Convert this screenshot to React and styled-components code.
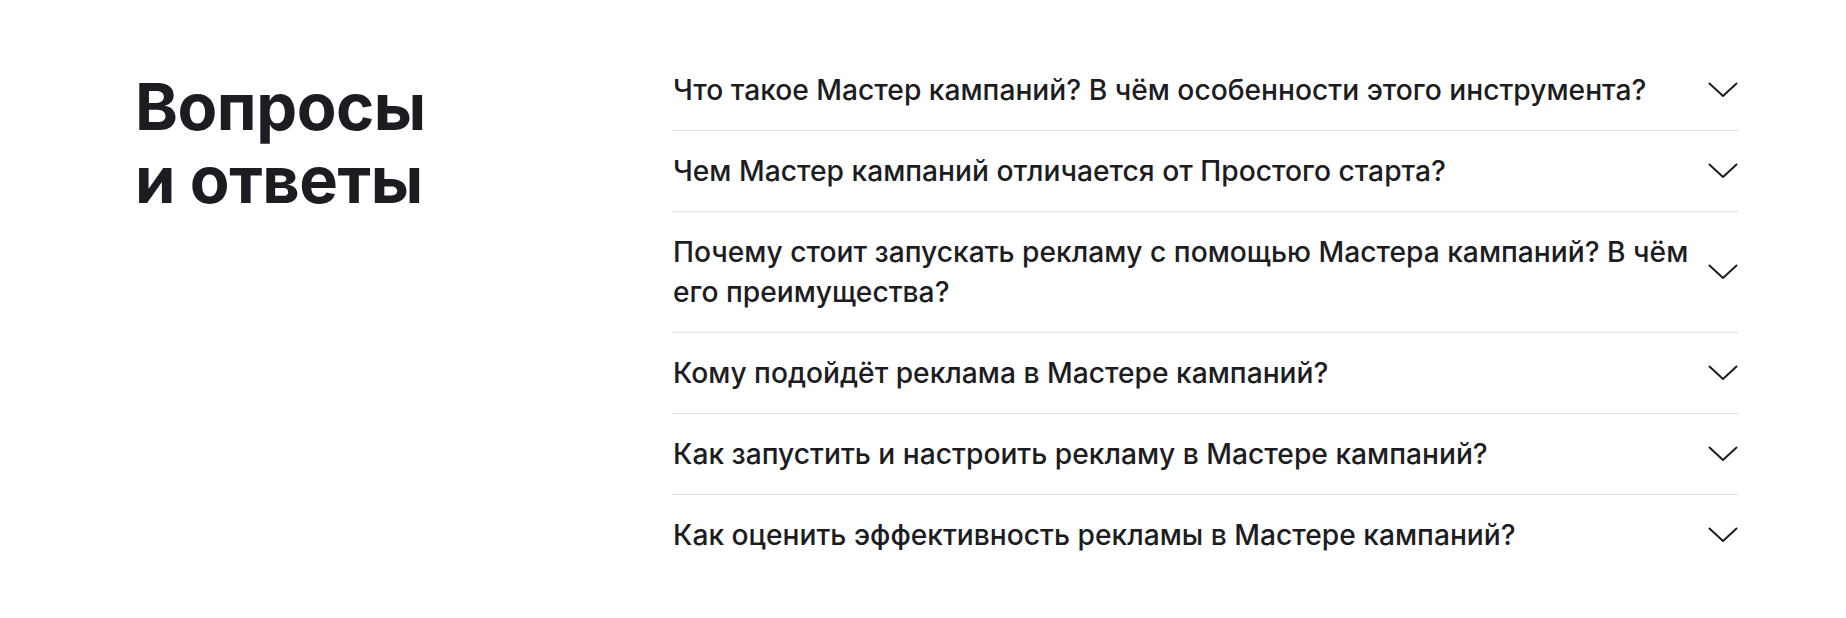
import React from 'react';
import styled, { createGlobalStyle } from 'styled-components';

const questions = [
  'Что такое Мастер кампаний? В чём особенности этого инструмента?',
  'Чем Мастер кампаний отличается от Простого старта?',
  'Почему стоит запускать рекламу с помощью Мастера кампаний? В чём его преимущества?',
  'Кому подойдёт реклама в Мастере кампаний?',
  'Как запустить и настроить рекламу в Мастере кампаний?',
  'Как оценить эффективность рекламы в Мастере кампаний?',
];

const GlobalStyle = createGlobalStyle`
  html, body {
    margin: 0;
    padding: 0;
    background: #fff;
  }
  body {
    font-family: Inter, "Noto Sans", sans-serif;
    color: #1c1d22;
  }
`;

const Section = styled.section`
  display: grid;
  grid-template-columns: 538px 1065px;
  padding: 50px 0 43px 135px;
  box-sizing: border-box;
  min-height: 618px;
`;

const Title = styled.h2`
  margin: 0;
  padding-top: 20px;
  font-family: Inter, "Noto Sans", sans-serif;
  font-weight: 700;
  font-size: 65px;
  line-height: 73px;
  letter-spacing: -0.5px;
  color: #1c1d22;
`;

const List = styled.div`
  display: flex;
  flex-direction: column;
`;

const Row = styled.div`
  display: flex;
  align-items: center;
  justify-content: space-between;
  gap: 4px;
  padding: 20px 0;
  border-top: ${(p) => (p.$first ? 'none' : '1px solid #dedfe1')};
  cursor: pointer;
`;

const Question = styled.div`
  font-family: Inter, "Noto Sans", sans-serif;
  font-weight: 500;
  font-size: 28.2px;
  line-height: 40px;
  color: #1c1d22;
  max-width: 1030px;
`;

const Chevron = () => (
  <svg width="30" height="16" viewBox="0 0 30 16" fill="none" style={{ flexShrink: 0 }}>
    <path d="M1.5 1.5 L15 14 L28.5 1.5" stroke="#1c1d22" strokeWidth="2" strokeLinecap="round" strokeLinejoin="round" />
  </svg>
);

export default function App() {
  return (
    <>
      <GlobalStyle />
      <Section>
        <Title>
          Вопросы
          <br />и ответы
        </Title>
        <List>
          {questions.map((q, i) => (
            <Row key={q} $first={i === 0}>
              <Question>{q}</Question>
              <Chevron />
            </Row>
          ))}
        </List>
      </Section>
    </>
  );
}
